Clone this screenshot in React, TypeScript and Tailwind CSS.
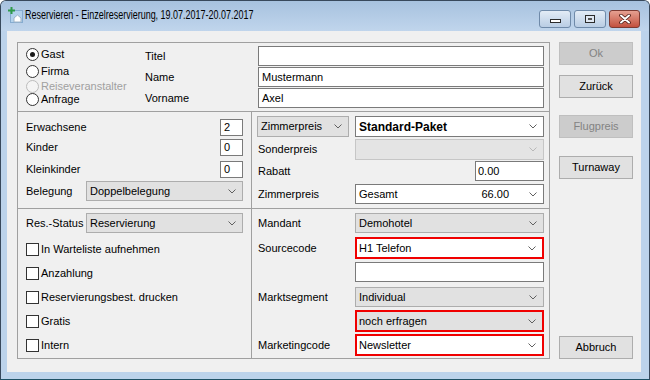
import React from "react";

type Variant = "gray" | "white" | "disabled";

function Chevron({ light }: { light?: boolean }) {
  return (
    <svg width="8" height="5" viewBox="0 0 8 5" className="shrink-0">
      <path
        d="M0.5 0.5 L4 4 L7.5 0.5"
        fill="none"
        stroke={light ? "#b8b8b8" : "#606060"}
        strokeWidth="1"
      />
    </svg>
  );
}

function Combo({
  children,
  variant = "gray",
  red,
  className = "",
  bold,
}: {
  children?: React.ReactNode;
  variant?: Variant;
  red?: boolean;
  className?: string;
  bold?: boolean;
}) {
  const look =
    variant === "white"
      ? "bg-white border-[#7a7a7a]"
      : variant === "disabled"
      ? "bg-[#e4e4e4] border-[#c6c6c6]"
      : "bg-[#e1e1e1] border-[#adadad]";
  return (
    <div
      className={`flex items-center pr-[6px] ${
        red ? "border-2 border-[#f00000] pl-[2px]" : `border pl-[3px] ${look}`
      } ${red && variant === "white" ? "bg-white" : ""} ${
        red && variant === "gray" ? "bg-[#e1e1e1]" : ""
      } ${className}`}
    >
      <div
        className={`flex-1 min-w-0 whitespace-nowrap ${
          bold ? "font-bold text-[12px]" : ""
        }`}
      >
        {children}
      </div>
      <Chevron light={variant === "disabled"} />
    </div>
  );
}

function Field({ value, className = "" }: { value?: string; className?: string }) {
  return (
    <div
      className={`bg-white border border-[#7a7a7a] flex items-center pl-[3px] whitespace-nowrap ${className}`}
    >
      {value}
    </div>
  );
}

function Radio({ label, checked, disabled }: { label: string; checked?: boolean; disabled?: boolean }) {
  return (
    <div className="flex items-center">
      <div
        className={`w-[13px] h-[13px] rounded-full border flex items-center justify-center shrink-0 ${
          disabled ? "border-[#bcbcbc] bg-[#f4f4f4]" : "border-[#333] bg-white"
        }`}
      >
        {checked && <div className="w-[5px] h-[5px] rounded-full bg-[#1a1a1a]" />}
      </div>
      <span className={`ml-[2px] ${disabled ? "text-[#a0a0a0]" : ""}`}>{label}</span>
    </div>
  );
}

function Check({ label }: { label: string }) {
  return (
    <div className="h-[24px] flex items-center">
      <div className="w-[13px] h-[13px] border border-[#333] bg-white shrink-0" />
      <span className="ml-[2px]">{label}</span>
    </div>
  );
}

function Btn({ label, disabled, className = "" }: { label: string; disabled?: boolean; className?: string }) {
  return (
    <div
      className={`h-[23px] w-[74px] border flex items-center justify-center ${
        disabled
          ? "bg-[#cccccc] border-[#bfbfbf] text-[#838383]"
          : "bg-[#e1e1e1] border-[#adadad]"
      } ${className}`}
    >
      {label}
    </div>
  );
}

function TitleIcon() {
  return (
    <svg width="16" height="16" viewBox="0 0 16 16">
      <rect x="2.5" y="3.5" width="12" height="12" fill="#b3d2ec" stroke="#86acd0" />
      <path d="M6 15 V11 L9.5 8 L13 11 V15 Z" fill="#ffffff" stroke="#9fb3c6" />
      <path d="M3.5 0 V7 M0 3.5 H7" stroke="#2e9a4a" strokeWidth="2" />
    </svg>
  );
}

export default function App() {
  return (
    <div className="w-[650px] h-[380px] flex flex-col bg-[#bcd3eb] border border-[#38495c] border-b-[#1f5266] rounded-t-[6px] overflow-hidden font-['Liberation_Sans',Arial,sans-serif] text-[11px] text-black">
      {/* title bar */}
      <div className="h-[30px] shrink-0 flex bg-linear-to-b from-[#a7c2df] to-[#c0d5ec] pl-[7px] pr-[9px]">
        <div className="flex items-center flex-1 min-w-0 pb-[2px]">
          <TitleIcon />
          <span className="ml-[1px] inline-block whitespace-nowrap text-[13px] text-black origin-left scale-x-[0.69]">
            Reservieren - Einzelreservierung, 19.07.2017-20.07.2017
          </span>
        </div>
        <div className="flex gap-[3px] mt-[9px] h-[18px]">
          <div className="w-[32px] h-[18px] rounded-[3px] border border-[#6f8aa9] bg-linear-to-b from-[#e3ecf6] to-[#b9cde4] flex items-end justify-center pb-[4px]">
            <div className="w-[11px] h-[4px] border border-[#2b2b2b] bg-white" />
          </div>
          <div className="w-[32px] h-[18px] rounded-[3px] border border-[#6f8aa9] bg-linear-to-b from-[#e3ecf6] to-[#b9cde4] flex items-center justify-center">
            <div className="w-[10px] h-[8px] border border-[#2b2b2b] bg-[#dfe7f1] flex items-center justify-center">
              <div className="w-[4px] h-[2px] bg-white border border-[#555]" />
            </div>
          </div>
          <div className="w-[31px] h-[18px] rounded-[3px] border border-[#7d3b33] bg-linear-to-b from-[#e5a091] to-[#c2503f] flex items-center justify-center">
            <svg width="12" height="10" viewBox="0 0 12 10">
              <path d="M2 1.5 L10 8.5 M10 1.5 L2 8.5" stroke="#4a1a14" strokeWidth="3.6" strokeLinecap="round" />
              <path d="M2 1.5 L10 8.5 M10 1.5 L2 8.5" stroke="#ffffff" strokeWidth="2" strokeLinecap="round" />
            </svg>
          </div>
        </div>
      </div>

      {/* frame + client */}
      <div className="flex pl-[6px]">
        <div className="w-[634px] h-[341px] bg-[#f0f0f0] flex">
          {/* group box */}
          <div className="ml-[10px] mt-[11px] w-[533px] h-[317px] border border-[#a0a0a0] flex flex-col">
            {/* section 1 */}
            <div className="h-[69px] border-b border-[#a0a0a0] flex">
              <div className="w-[127px] pl-[8px] pt-[3px] flex flex-col">
                <div className="h-[17px] flex items-center">
                  <Radio label="Gast" checked />
                </div>
                <div className="h-[16px] flex items-center">
                  <Radio label="Firma" />
                </div>
                <div className="h-[14px] flex items-center">
                  <Radio label="Reiseveranstalter" disabled />
                </div>
                <div className="h-[12px] flex items-center">
                  <Radio label="Anfrage" />
                </div>
              </div>
              <div className="w-[113px] pt-[3px] flex flex-col gap-[1px]">
                <div className="h-[20px] flex items-center">Titel</div>
                <div className="h-[20px] flex items-center">Name</div>
                <div className="h-[20px] flex items-center">Vorname</div>
              </div>
              <div className="w-[286px] pt-[3px] flex flex-col gap-[1px]">
                <Field className="h-[20px]" />
                <Field className="h-[20px]" value="Mustermann" />
                <Field className="h-[20px]" value="Axel" />
              </div>
            </div>

            {/* section 2 */}
            <div className="h-[97px] border-b border-[#a0a0a0] flex">
              <div className="w-[234px] border-r border-[#a0a0a0] pl-[8px] pr-[8px] pt-[7px] flex flex-col">
                <div className="h-[17px] flex items-center justify-between">
                  <span>Erwachsene</span>
                  <Field className="w-[23px] h-[17px]" value="2" />
                </div>
                <div className="h-[17px] mt-[3px] flex items-center justify-between">
                  <span>Kinder</span>
                  <Field className="w-[23px] h-[17px]" value="0" />
                </div>
                <div className="h-[17px] mt-[5px] flex items-center justify-between">
                  <span>Kleinkinder</span>
                  <Field className="w-[23px] h-[17px]" value="0" />
                </div>
                <div className="h-[20px] mt-[3px] flex items-center">
                  <span className="w-[60px] shrink-0">Belegung</span>
                  <Combo className="flex-1 h-[20px]">Doppelbelegung</Combo>
                </div>
              </div>
              <div className="flex-1 pt-[4px] pr-[5px] flex flex-col">
                <div className="h-[21px] flex items-center">
                  <div className="w-[103px] pl-[5px]">
                    <Combo className="w-[92px] h-[21px]">Zimmerpreis</Combo>
                  </div>
                  <Combo variant="white" bold className="flex-1 h-[21px]">
                    Standard-Paket
                  </Combo>
                </div>
                <div className="h-[21px] mt-[2px] flex items-center">
                  <span className="w-[103px] pl-[6px]">Sonderpreis</span>
                  <Combo variant="disabled" className="flex-1 h-[21px]" />
                </div>
                <div className="h-[20px] mt-[1px] flex items-center">
                  <span className="flex-1 pl-[6px]">Rabatt</span>
                  <Field className="w-[69px] h-[20px] !pl-[2px]" value="0.00" />
                </div>
                <div className="h-[20px] mt-[3px] flex items-center">
                  <span className="w-[103px] pl-[6px]">Zimmerpreis</span>
                  <Combo variant="white" className="flex-1 h-[20px]">
                    <div className="flex justify-between pr-[20px]">
                      <span>Gesamt</span>
                      <span>66.00</span>
                    </div>
                  </Combo>
                </div>
              </div>
            </div>

            {/* section 3 */}
            <div className="flex-1 flex">
              <div className="w-[234px] border-r border-[#a0a0a0] pl-[8px] pr-[8px] pt-[4px] flex flex-col">
                <div className="h-[20px] flex items-center">
                  <span className="w-[60px] shrink-0">Res.-Status</span>
                  <Combo className="flex-1 h-[20px]">Reservierung</Combo>
                </div>
                <div className="mt-[4px] flex flex-col">
                  <Check label="In Warteliste aufnehmen" />
                  <Check label="Anzahlung" />
                  <Check label="Reservierungsbest. drucken" />
                  <Check label="Gratis" />
                  <Check label="Intern" />
                </div>
              </div>
              <div className="flex-1 pt-[4px] pr-[5px] flex flex-col">
                <div className="h-[20px] flex items-center">
                  <span className="w-[103px] pl-[6px]">Mandant</span>
                  <Combo className="flex-1 h-[20px]">Demohotel</Combo>
                </div>
                <div className="h-[22px] mt-[4px] flex items-center">
                  <span className="w-[103px] pl-[6px]">Sourcecode</span>
                  <Combo variant="white" red className="flex-1 h-[22px]">
                    H1 Telefon
                  </Combo>
                </div>
                <div className="h-[20px] mt-[3px] flex items-center">
                  <span className="w-[103px]" />
                  <Field className="flex-1 h-[20px]" />
                </div>
                <div className="h-[20px] mt-[5px] flex items-center">
                  <span className="w-[103px] pl-[6px]">Marktsegment</span>
                  <Combo className="flex-1 h-[20px]">Individual</Combo>
                </div>
                <div className="h-[22px] mt-[3px] flex items-center">
                  <span className="w-[103px]" />
                  <Combo variant="gray" red className="flex-1 h-[22px]">
                    noch erfragen
                  </Combo>
                </div>
                <div className="h-[22px] mt-[2px] flex items-center">
                  <span className="w-[103px] pl-[6px]">Marketingcode</span>
                  <Combo variant="white" red className="flex-1 h-[22px]">
                    Newsletter
                  </Combo>
                </div>
              </div>
            </div>
          </div>

          {/* buttons */}
          <div className="ml-[9px] mt-[11px] flex flex-col">
            <Btn label="Ok" disabled />
            <Btn label="Zurück" className="mt-[10px]" />
            <Btn label="Flugpreis" disabled className="mt-[17px]" />
            <Btn label="Turnaway" className="mt-[18px]" />
            <Btn label="Abbruch" className="mt-[157px]" />
          </div>
        </div>
      </div>
    </div>
  );
}
